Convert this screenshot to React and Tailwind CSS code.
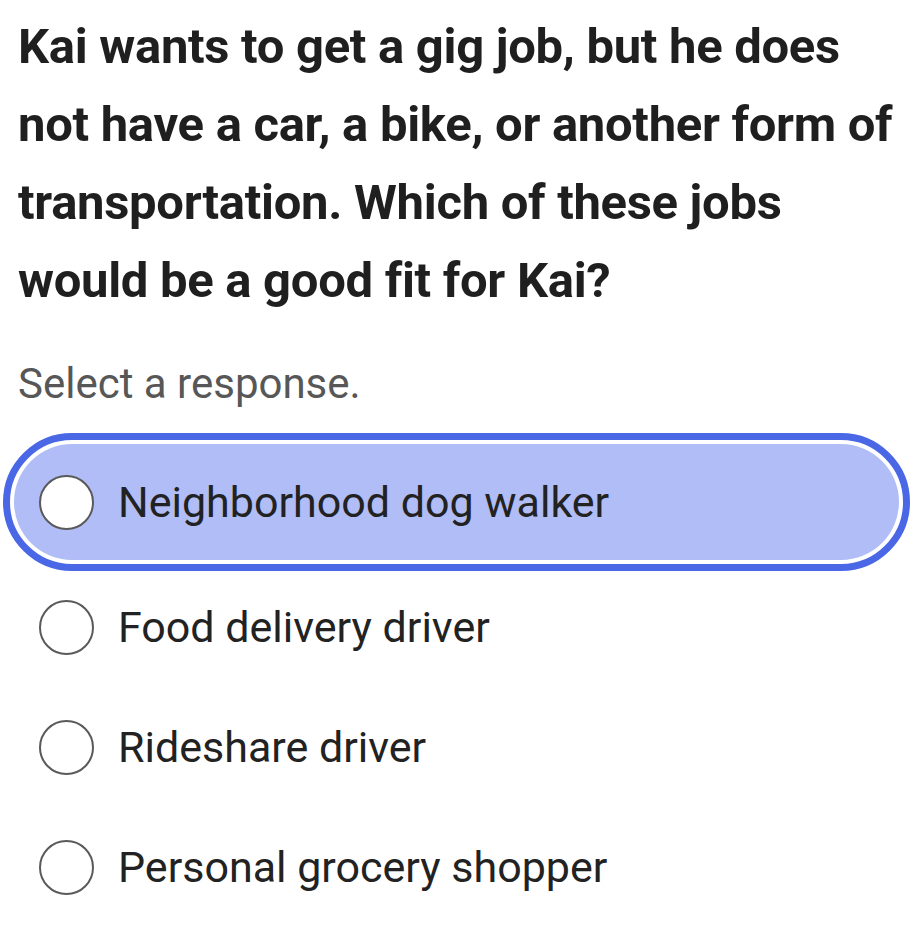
import React from 'react';

const options = [
  'Neighborhood dog walker',
  'Food delivery driver',
  'Rideshare driver',
  'Personal grocery shopper',
];

function Radio() {
  return (
    <span className="block w-[55px] h-[55px] shrink-0 rounded-full border-2 border-[#5a5a5a] bg-white" />
  );
}

export default function App() {
  const selected = 0;

  return (
    <div className="w-[913px] h-[952px] bg-white overflow-hidden" style={{ fontFamily: 'Roboto, "Open Sans", sans-serif' }}>
      {/* Question */}
      <h1 className="pl-[18px] pr-[2px] pt-[8px] text-[49px] leading-[78px] font-bold text-[#1f1f1f] tracking-[-0.3px]">
        Kai wants to get a gig job, but he does not have a car, a bike, or another form of transportation. Which of these jobs would be a good fit for Kai?
      </h1>

      <p className="px-[18px] mt-[38px] text-[42px] leading-[52px] text-[#575757]">Select a response.</p>

      {/* Answers */}
      <div className="mt-[23px] flex flex-col">
        {options.map((label, i) =>
          i === selected ? (
            <div key={label} className="mx-[3px] mb-[-4px] h-[138px] rounded-full border-[7px] border-[#4a68e6] p-[4px] bg-white">
              <div className="h-full rounded-full bg-[#b0bdf6] flex items-center pl-[25px] gap-[24px]">
                <Radio />
                <span className="text-[43px] text-[#222]">{label}</span>
              </div>
            </div>
          ) : (
            <div key={label} className="h-[120px] flex items-center pl-[39px] gap-[24px]">
              <Radio />
              <span className="text-[43px] text-[#222]">{label}</span>
            </div>
          )
        )}
      </div>
    </div>
  );
}
